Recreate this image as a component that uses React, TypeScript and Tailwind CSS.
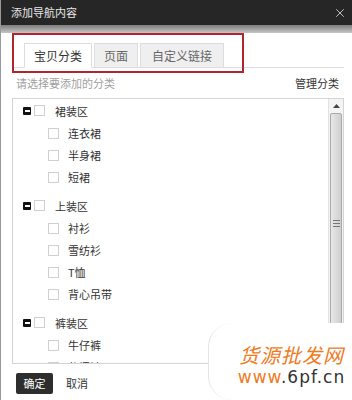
import React from 'react';
import { X } from 'lucide-react';

const groups = [
  { name: '裙装区', items: ['连衣裙', '半身裙', '短裙'] },
  { name: '上装区', items: ['衬衫', '雪纺衫', 'T恤', '背心吊带'] },
  { name: '裤装区', items: ['牛仔裤', '休闲裤'] },
];

const Check = () => (
  <span className="inline-block w-[11px] h-[11px] border border-[#d0d0d0] bg-white shrink-0" />
);

const Minus = () => (
  <span className="w-[8px] h-[8px] bg-[#111] rounded-[1px] flex items-center justify-center shrink-0">
    <span className="w-[5px] h-[2px] bg-white" />
  </span>
);

export default function App() {
  return (
    <div
      className="relative w-[352px] h-[400px] overflow-hidden bg-white border-l border-[#999]"
      style={{ fontFamily: '"Noto Sans CJK SC", "Noto Sans", sans-serif' }}
    >
      {/* title bar */}
      <div className="h-[25px] bg-[#262626] flex items-center justify-between pl-[10px] pr-[5px] text-[#e6e6e6] text-[11px]">
        <span>添加导航内容</span>
        <X size={14} strokeWidth={1.6} className="text-[#c8c8c8]" />
      </div>
      <div className="h-[8px] bg-gradient-to-b from-[#7d7d7d] to-[#c6c6c6]" />

      <div className="pl-[11px] pr-[8px]">
        {/* tabs */}
        <div className="mt-[10px] flex items-end gap-[2px] pl-[12px] border-b border-[#ddd] h-[25px]">
          <div className="w-[68px] h-[25px] -mb-px bg-white border border-[#ddd] border-b-white flex items-center justify-center text-[12px] text-[#333]">
            宝贝分类
          </div>
          <div className="w-[44px] h-[24px] bg-[#efefef] border border-[#ddd] border-b-0 flex items-center justify-center text-[12px] text-[#666]">
            页面
          </div>
          <div className="w-[84px] h-[24px] bg-[#efefef] border border-[#ddd] border-b-0 flex items-center justify-center text-[12px] text-[#666]">
            自定义链接
          </div>
        </div>

        <div className="h-[30px] flex items-center justify-between pl-[4px] pr-[5px] text-[11px]">
          <span className="text-[#a0a0a0]">请选择要添加的分类</span>
          <span className="text-[#333]">管理分类</span>
        </div>

        {/* list */}
        <div className="h-[266px] border border-[#d4d4d4] flex overflow-hidden">
          <div className="flex-1 pt-[1px] text-[11px] text-[#333]">
            {groups.map((g, gi) => (
              <div key={g.name} className={gi > 0 ? 'mt-[7px]' : ''}>
                <div className="h-[22px] flex items-center pl-[10px]">
                  <Minus />
                  <span className="ml-[3px]"><Check /></span>
                  <span className="ml-[10px] leading-none">{g.name}</span>
                </div>
                {g.items.map((it) => (
                  <div key={it} className="h-[22px] flex items-center pl-[35px]">
                    <Check />
                    <span className="ml-[9px] leading-none">{it}</span>
                  </div>
                ))}
              </div>
            ))}
          </div>
          {/* scrollbar */}
          <div className="w-[15px] flex flex-col bg-[#f4f4f4] border-l border-[#e2e2e2]">
            <div className="h-[14px] flex items-center justify-center">
              <svg width="7" height="4" viewBox="0 0 7 4">
                <path d="M0 4 L3.5 0 L7 4 Z" fill="#444" />
              </svg>
            </div>
            <div className="flex-1 mx-[1px] mb-[30px] bg-gradient-to-r from-[#e8e8e8] to-[#cfcfcf] border border-[#a9a9a9] rounded-[2px] flex flex-col items-center justify-center gap-[2px]">
              <span className="w-[7px] h-px bg-[#777]" />
              <span className="w-[7px] h-px bg-[#777]" />
              <span className="w-[7px] h-px bg-[#777]" />
            </div>
          </div>
        </div>
      </div>

      {/* footer */}
      <div className="pl-[15px] pt-[9px] flex items-center gap-[13px] text-[11px]">
        <button className="w-[37px] h-[21px] bg-[#2e2e2e] text-white rounded-[2px] flex items-center justify-center">
          确定
        </button>
        <span className="text-[#333]">取消</span>
      </div>

      {/* red annotation */}
      <div className="absolute left-[11px] top-[33px] w-[232px] h-[40px] border-2 border-[#b3252d]" />

      {/* watermark */}
      <div className="absolute left-[207px] top-[323px] right-0 bottom-0 bg-white rounded-l-[24px] border-l border-[#e4e4e4] flex flex-col items-center justify-center pl-[22px] pt-[6px]">
        <span className="text-[20px] leading-[24px] text-[#f07a1e] italic tracking-[1px]">货源批发网</span>
        <span
          className="text-[17px] leading-[20px] text-[#333] tracking-[1px]"
          style={{ fontFamily: '"DejaVu Sans", sans-serif' }}
        >
          <span className="text-[#f07a1e]">www</span>.6pf.cn
        </span>
      </div>
    </div>
  );
}
